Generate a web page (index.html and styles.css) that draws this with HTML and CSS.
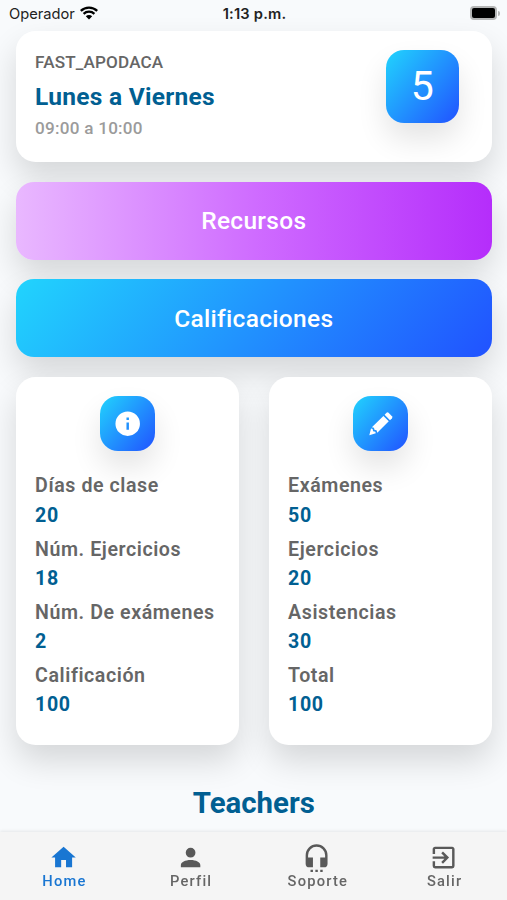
FILE: index.html
```html
<!DOCTYPE html>
<html lang="es">
<head>
  <meta charset="UTF-8">
  <meta name="viewport" content="width=device-width, initial-scale=1.0">
  <title>Home</title>
  <link rel="stylesheet" href="styles.css">
</head>
<body>

  <header class="status">
    <div class="carrier">
      <span>Operador</span>
      <svg class="wifi" viewBox="0 0 18 14">
        <path d="M0.8 4.9 A11.8 11.8 0 0 1 17.2 4.9" />
        <path d="M3.6 7.8 A7.8 7.8 0 0 1 14.4 7.8" />
        <path class="dot" d="M9 13.6 L5.8 10.3 A4.6 4.6 0 0 1 12.2 10.3 Z" />
      </svg>
    </div>
    <div class="clock">1:13 p.m.</div>
    <div class="battery-wrap">
      <div class="battery"></div>
      <div class="battery-tip"></div>
    </div>
  </header>

  <main>
    <section class="card course">
      <div>
        <div class="course-name">FAST_APODACA</div>
        <div class="course-days">Lunes a Viernes</div>
        <div class="course-time">09:00 a 10:00</div>
      </div>
      <div class="badge level">5</div>
    </section>

    <button class="btn btn-purple">Recursos</button>
    <button class="btn btn-blue">Calificaciones</button>

    <div class="columns">
      <section class="card info">
        <div class="badge icon-badge">
          <svg viewBox="0 0 24 24"><path d="M13,9H11V7H13M13,17H11V11H13M12,2A10,10 0 0,0 2,12A10,10 0 0,0 12,22A10,10 0 0,0 22,12A10,10 0 0,0 12,2Z" /></svg>
        </div>
        <dl>
          <dt>Días de clase</dt>
          <dd>20</dd>
          <dt>Núm. Ejercicios</dt>
          <dd>18</dd>
          <dt>Núm. De exámenes</dt>
          <dd>2</dd>
          <dt>Calificación</dt>
          <dd>100</dd>
        </dl>
      </section>

      <section class="card info">
        <div class="badge icon-badge">
          <svg viewBox="0 0 24 24">
            <path d="M16.8,3.1Q17.6,2.4 18.4,3.1L21.2,5.9Q21.9,6.7 21.2,7.5L19.6,9.1L15.2,4.7Z" />
            <path d="M14.2,5.7L18.6,10.1L9.2,19.4L8.6,17.4L6.9,17L6.5,15.4L4.8,15Z" />
            <path d="M4.1,16L5.4,16.4L5.8,18.1L7.6,18.6L8,19.9L2.7,21.4Z" />
          </svg>
        </div>
        <dl>
          <dt>Exámenes</dt>
          <dd>50</dd>
          <dt>Ejercicios</dt>
          <dd>20</dd>
          <dt>Asistencias</dt>
          <dd>30</dd>
          <dt>Total</dt>
          <dd>100</dd>
        </dl>
      </section>
    </div>

    <h2>Teachers</h2>
  </main>

  <nav>
    <a class="active">
      <svg viewBox="0 0 24 24"><path d="M10,20V14H14V20H19V12H22L12,3L2,12H5V20H10Z" /></svg>
      <span>Home</span>
    </a>
    <a>
      <svg viewBox="0 0 24 24"><path d="M12,4A4,4 0 0,1 16,8A4,4 0 0,1 12,12A4,4 0 0,1 8,8A4,4 0 0,1 12,4M12,14C16.42,14 20,15.79 20,18V20H4V18C4,15.79 7.58,14 12,14Z" /></svg>
      <span>Perfil</span>
    </a>
    <a>
      <svg viewBox="0 0 24 24"><path d="M12,1A9,9 0 0,1 21,10V17A3,3 0 0,1 18,20H15V12H19V10A7,7 0 0,0 12,3A7,7 0 0,0 5,10V12H9V20H6A3,3 0 0,1 3,17V10A9,9 0 0,1 12,1M15,24V22H17V24H15M11,24V22H13V24H11M7,24V22H9V24H7Z" /></svg>
      <span>Soporte</span>
    </a>
    <a>
      <svg viewBox="0 0 24 24"><path d="M19,3H5C3.89,3 3,3.89 3,5V9H5V5H19V19H5V15H3V19A2,2 0 0,0 5,21H19A2,2 0 0,0 21,19V5C21,3.89 20.1,3 19,3M10.08,15.58L11.5,17L16.5,12L11.5,7L10.08,8.41L12.67,11H3V13H12.67L10.08,15.58Z" /></svg>
      <span>Salir</span>
    </a>
  </nav>

</body>
</html>
```
FILE: styles.css
```css
* {
  box-sizing: border-box;
}

body {
  margin: 0;
  height: 900px;
  overflow: hidden;
  display: flex;
  flex-direction: column;
  font-family: Roboto, sans-serif;
  background-color: #f8fafc;
  color: #666;
}

.status {
  display: grid;
  grid-template-columns: 1fr auto 1fr;
  align-items: center;
  height: 30.5px;
  padding: 0 7px 3px 9px;
  font-family: Inter, sans-serif;
  font-size: 14.7px;
  color: #222;
}

.carrier {
  display: flex;
  align-items: center;
  gap: 5px;
}

.wifi {
  width: 18px;
  height: 14px;
  margin-top: -2px;
  fill: none;
  stroke: #000;
  stroke-width: 2.3;
}

.wifi .dot {
  fill: #000;
  stroke: none;
}

.clock {
  font-weight: 600;
  letter-spacing: 0.2px;
}

.battery-wrap {
  display: flex;
  align-items: center;
  justify-content: flex-end;
  gap: 1px;
  margin-top: -1px;
}

.battery {
  width: 27px;
  height: 14px;
  border: 2px solid #b5b6b6;
  border-radius: 4px;
  background-color: #000;
}

.battery-tip {
  width: 2px;
  height: 5px;
  border-radius: 0 2px 2px 0;
  background-color: #b5b6b6;
}

main {
  flex: 1;
  display: flex;
  flex-direction: column;
  gap: 19.6px;
  padding: 0 15px 0 15.5px;
}

.card,
.btn {
  box-shadow: 0 16px 32px rgba(0, 0, 0, 0.14);
}

.card {
  background-color: #fff;
  border-radius: 19.6px;
}

.course {
  display: flex;
  justify-content: space-between;
  height: 131.5px;
  padding: 19px 33px 0 19.6px;
}

.course-name {
  font-size: 17.1px;
  font-weight: 500;
  line-height: 24px;
  letter-spacing: 0.15px;
}

.course-days {
  padding-top: 1px;
  font-size: 24.5px;
  font-weight: 700;
  line-height: 43px;
  letter-spacing: 0.27px;
  color: #015f92;
}

.course-time {
  font-size: 17.1px;
  font-weight: 500;
  line-height: 20px;
  letter-spacing: 0.25px;
  color: #9b9b9b;
}

.badge {
  display: flex;
  align-items: center;
  justify-content: center;
  color: #fff;
  background: linear-gradient(310deg, #2152ff, #21d4fd);
  border-radius: 18px;
  box-shadow: 0 16px 30px rgba(0, 0, 0, 0.11);
}

.level {
  width: 73.5px;
  height: 73.5px;
  font-size: 41px;
  font-weight: 400;
}

.btn {
  flex: none;
  height: 78px;
  padding: 0;
  border: none;
  border-radius: 18px;
  font-family: inherit;
  font-size: 24.5px;
  font-weight: 500;
  letter-spacing: 0.3px;
  color: #fff;
}

.btn-purple {
  background: linear-gradient(90deg, #e9b8ff, #cf6cff 50%, #b52dfb);
}

.btn-blue {
  background: linear-gradient(310deg, #2152ff, #21d4fd);
}

.columns {
  display: flex;
  gap: 29.5px;
}

.info {
  flex: 1;
  height: 368px;
  padding: 19.6px;
}

.icon-badge {
  width: 55px;
  height: 55px;
  margin: 0 auto;
}

.icon-badge svg {
  width: 29.4px;
  height: 29.4px;
  fill: #fff;
}

dl {
  margin: 20px 0 0;
  font-size: 19.6px;
  line-height: 29.5px;
  letter-spacing: 0.6px;
  white-space: nowrap;
}

dt {
  font-weight: 600;
  letter-spacing: 0.57px;
}

dd {
  margin: 0 0 4.2px;
  font-weight: 700;
  color: #015f92;
}

h2 {
  margin: 21px 0 0;
  text-align: center;
  font-size: 29.4px;
  font-weight: 700;
  line-height: 36px;
  color: #015f92;
}

nav {
  position: fixed;
  left: 0;
  right: 0;
  bottom: 0;
  height: 68.5px;
  display: flex;
  background-color: #f5f5f5;
  box-shadow: 0 -1px 3px rgba(0, 0, 0, 0.08);
}

nav a {
  flex: 1;
  display: flex;
  flex-direction: column;
  align-items: center;
  padding-top: 11.5px;
  font-size: 14.7px;
  font-weight: 500;
  line-height: 18px;
  letter-spacing: 1.2px;
}

nav span {
  padding-left: 2px;
}

nav svg {
  width: 29.2px;
  height: 29.2px;
  fill: #595959;
}

nav .active {
  color: #1976d2;
}

nav .active svg {
  fill: #1976d2;
}
```
